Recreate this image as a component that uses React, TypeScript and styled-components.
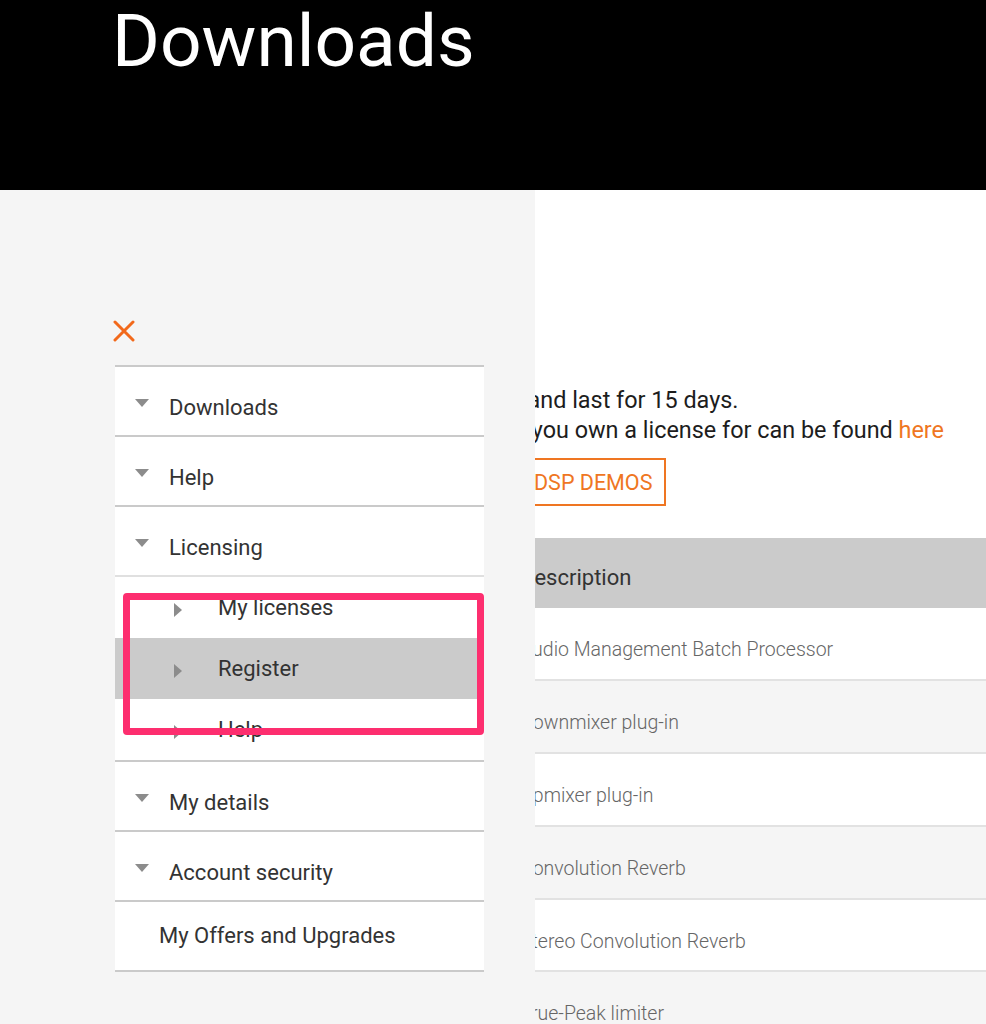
import { createGlobalStyle, styled } from "styled-components";

const ORANGE = "#ef7622";
const SIDE_COL = 408;

const GlobalStyle = createGlobalStyle`
  * { box-sizing: border-box; }
  html, body { margin: 0; padding: 0; background: #fff; }
  body {
    font-family: Roboto, "Noto Sans", "Liberation Sans", sans-serif;
    color: #1d1d1d;
  }
`;

type SubItem = { label: string; active?: boolean };
type MenuItem = { label: string; arrow?: boolean; children?: SubItem[] };

const MENU: MenuItem[] = [
  { label: "Downloads", arrow: true },
  { label: "Help", arrow: true },
  {
    label: "Licensing",
    arrow: true,
    children: [
      { label: "My licenses" },
      { label: "Register", active: true },
      { label: "Help" },
    ],
  },
  { label: "My details", arrow: true },
  { label: "Account security", arrow: true },
  { label: "My Offers and Upgrades" },
];

const PRODUCTS = [
  { name: "AMBP", description: "Audio Management Batch Processor" },
  { name: "Downmixer", description: "Downmixer plug-in" },
  { name: "Upmixer", description: "Upmixer plug-in" },
  { name: "Convolution Reverb", description: "Convolution Reverb" },
  { name: "Stereo Reverb", description: "Stereo Convolution Reverb" },
  { name: "Limiter", description: "True-Peak limiter" },
];

const CloseIcon = () => (
  <svg width="22" height="22" viewBox="0 0 22 22">
    <path
      d="M2 2 L20 20 M20 2 L2 20"
      stroke="#f2691b"
      strokeWidth="3"
      strokeLinecap="round"
    />
  </svg>
);

const App = () => {
  return (
    <>
      <GlobalStyle />
      <St.Page>
        <St.Header>
          <St.Title>Downloads</St.Title>
        </St.Header>

        <St.Main>
          <St.Intro>
            Demo licenses for all products are free, and last for 15 days.
            <br />
            Installers and updates for products that you own a license for can
            be found <St.Link href="#">here</St.Link>
          </St.Intro>
          <St.ButtonRow>
            <St.OutlineButton>MY PRODUCTS</St.OutlineButton>
            <St.OutlineButton>DSP DEMOS</St.OutlineButton>
          </St.ButtonRow>
          <St.Table>
            <St.HeadRow>
              <span>Product</span>
              <span>Description</span>
            </St.HeadRow>
            {PRODUCTS.map((p, idx) => (
              <St.Row key={p.name} $striped={idx % 2 === 1}>
                <span>{p.name}</span>
                <span>{p.description}</span>
              </St.Row>
            ))}
          </St.Table>
        </St.Main>

        <St.Drawer>
          <St.Close aria-label="Close menu">
            <CloseIcon />
          </St.Close>
          <St.Menu>
            {MENU.map((item) => (
              <li key={item.label}>
                <St.TopRow $arrow={!!item.arrow}>
                  {item.arrow && <St.CaretDown />}
                  <St.TopLabel $arrow={!!item.arrow}>{item.label}</St.TopLabel>
                </St.TopRow>
                {item.children && (
                  <St.SubList>
                    {item.children.map((sub) => (
                      <St.SubRow key={sub.label} $active={!!sub.active}>
                        <St.CaretRight />
                        {sub.label}
                      </St.SubRow>
                    ))}
                    {/* annotation box drawn over the sub menu */}
                    <St.Highlight />
                  </St.SubList>
                )}
              </li>
            ))}
          </St.Menu>
        </St.Drawer>
      </St.Page>
    </>
  );
};

export default App;

const St = {
  Page: styled.div`
    position: relative;
    min-height: 1024px;
    overflow: hidden;
  `,
  Header: styled.header`
    height: 190px;
    background: #000;
  `,
  Title: styled.h1`
    margin: 0;
    padding: 5px 0 0 112px;
    font-size: 73px;
    font-weight: 400;
    line-height: 1;
    color: #fff;
  `,
  Main: styled.main`
    padding: 195px 0 0 112px;
  `,
  Intro: styled.p`
    margin: 0 0 0 4px;
    font-size: 23.4px;
    line-height: 30px;
    white-space: nowrap;
    color: #1d1d1d;
  `,
  Link: styled.a`
    color: ${ORANGE};
    text-decoration: none;
  `,
  ButtonRow: styled.div`
    display: grid;
    grid-template-columns: ${SIDE_COL}px auto;
    justify-content: start;
    margin-top: 13px;
  `,
  OutlineButton: styled.button`
    justify-self: start;
    height: 48px;
    padding: 0 12px;
    border: 2px solid ${ORANGE};
    background: #fff;
    color: ${ORANGE};
    font-family: inherit;
    font-size: 21.5px;
    cursor: pointer;
  `,
  Table: styled.section`
    margin-top: 32px;
  `,
  HeadRow: styled.div`
    display: grid;
    grid-template-columns: ${SIDE_COL}px 1fr;
    align-items: center;
    height: 70px;
    padding-top: 8px;
    background: #cbcbcb;
    font-size: 22px;
    color: #333;
  `,
  Row: styled.div<{ $striped: boolean }>`
    display: grid;
    grid-template-columns: ${SIDE_COL}px 1fr;
    align-items: center;
    height: 72.9px;
    padding-top: 12px;
    background: ${({ $striped }) => ($striped ? "#f5f5f5" : "#fff")};
    border-bottom: 2px solid #e2e2e2;
    font-size: 19.5px;
    font-weight: 300;
    color: #666;
  `,
  Drawer: styled.aside`
    position: absolute;
    top: 190px;
    left: 0;
    bottom: 0;
    width: 535px;
    padding: 130px 0 0 115px;
    background: #f5f5f5;
  `,
  Close: styled.button`
    display: block;
    margin: 0 0 23px -2px;
    padding: 0;
    border: 0;
    background: none;
    line-height: 0;
    cursor: pointer;
  `,
  Menu: styled.ul`
    width: 369px;
    margin: 0;
    padding: 0;
    list-style: none;
    background: #fff;
    border-top: 2px solid #cacaca;

    & > li {
      border-bottom: 2px solid #cacaca;
    }
  `,
  TopRow: styled.div<{ $arrow: boolean }>`
    display: flex;
    align-items: center;
    height: 68px;
    padding-left: ${({ $arrow }) => ($arrow ? "20px" : "44px")};
    font-size: 22px;
    color: #333;
  `,
  TopLabel: styled.span<{ $arrow: boolean }>`
    line-height: 1;
    margin-top: ${({ $arrow }) => ($arrow ? "14px" : "0")};
  `,
  CaretDown: styled.span`
    width: 0;
    height: 0;
    margin: 3px 20px 0 0;
    border-left: 7.5px solid transparent;
    border-right: 7.5px solid transparent;
    border-top: 8px solid #8c8c8c;
  `,
  SubList: styled.div`
    position: relative;
    border-top: 2px solid #e0e0e0;
  `,
  SubRow: styled.div<{ $active: boolean }>`
    display: flex;
    align-items: center;
    height: 61px;
    padding-left: 59px;
    background: ${({ $active }) => ($active ? "#cbcbcb" : "transparent")};
    font-size: 22px;
    color: #333;
  `,
  CaretRight: styled.span`
    width: 0;
    height: 0;
    margin: 5px 36px 0 0;
    border-top: 7.5px solid transparent;
    border-bottom: 7.5px solid transparent;
    border-left: 8px solid #8c8c8c;
  `,
  Highlight: styled.div`
    position: absolute;
    top: 16px;
    left: 8px;
    width: 361px;
    height: 142px;
    border: 7px solid #fd2e6f;
    border-radius: 4px;
  `,
};
